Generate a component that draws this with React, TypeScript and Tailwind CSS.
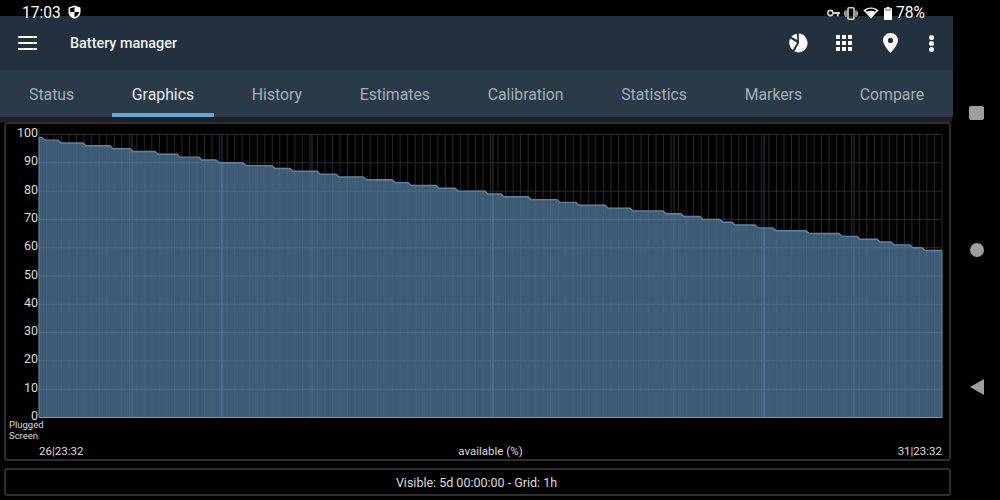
import React from "react";

const BP: [number, number][] = [
  [43, 99], [59, 98], [84, 97], [111, 96], [131, 95], [156, 94], [178, 93], [200, 92], [217, 91], [244, 90],
  [273, 89], [291, 88], [318, 87], [337, 86], [364, 85], [393, 84], [409, 83], [437, 82], [456, 81], [486, 80],
  [502, 79], [529, 78], [558, 77], [577, 76], [606, 75], [631, 74], [664, 73], [682, 72], [701, 71], [721, 70],
  [733, 69], [756, 68], [774, 67], [807, 66], [840, 65], [858, 64], [878, 63], [892, 62], [911, 61], [923, 60],
];
const X0 = 39, X1 = 942, Y0 = 417.5, K = 2.83;
const yOf = (v: number) => Y0 - v * K;

function linePoints() {
  let p = `${X0},${yOf(99)}`;
  BP.forEach(([x, v]) => {
    p += ` ${x - 1},${yOf(v)} ${x + 2},${yOf(v - 1)}`;
  });
  p += ` ${X1},${yOf(59)}`;
  return p;
}

function Chart() {
  const pts = linePoints();
  const step = (X1 - X0) / 120;
  const verticals = Array.from({ length: 121 }, (_, i) => X0 + i * step);
  const ticks = [0, 10, 20, 30, 40, 50, 60, 70, 80, 90, 100];
  const clipId = "fillclip";
  return (
    <svg viewBox="6 124 943 335" width={943} height={335} className="block">
      <defs>
        <clipPath id={clipId}>
          <polygon points={`${X0},${Y0} ${pts} ${X1},${Y0}`} />
        </clipPath>
      </defs>
      {verticals.map((x) => (
        <line key={x} x1={x} x2={x} y1={134} y2={Y0} stroke="#282828" strokeWidth={1} />
      ))}
      {[132, 312, 493, 674, 854].map((x) => (
        <line key={x} x1={x} x2={x} y1={134} y2={Y0} stroke="#38382c" strokeWidth={1} />
      ))}
      {[222, 764].map((x) => (
        <line key={x} x1={x} x2={x} y1={134} y2={Y0} stroke="#34345c" strokeWidth={1} />
      ))}
      {ticks.map((t) => (
        <line key={t} x1={X0} x2={X1} y1={yOf(t)} y2={yOf(t)} stroke="#2c2c2c" strokeWidth={1} />
      ))}
      <polygon points={`${X0},${Y0} ${pts} ${X1},${Y0}`} fill="#3e5b75" />
      <g clipPath={`url(#${clipId})`}>
        {verticals.map((x) => (
          <line key={x} x1={x} x2={x} y1={134} y2={Y0} stroke="#47647e" strokeWidth={1} />
        ))}
        {[132, 312, 674, 854].map((x) => (
          <line key={x} x1={x} x2={x} y1={134} y2={Y0} stroke="#4f6c82" strokeWidth={1} />
        ))}
        <line x1={493} x2={493} y1={134} y2={Y0} stroke="#5f7d92" strokeWidth={1} />
        {[222, 764].map((x) => (
          <line key={x} x1={x} x2={x} y1={134} y2={Y0} stroke="#5a80ab" strokeWidth={1} />
        ))}
        {ticks.map((t) => (
          <line key={t} x1={X0} x2={X1} y1={yOf(t)} y2={yOf(t)} stroke="#4f6d87" strokeWidth={1} />
        ))}
      </g>
      <polyline points={pts} fill="none" stroke="#5c86a8" strokeWidth={1.4} />
      <line x1={X0} x2={X1} y1={Y0} y2={Y0} stroke="#6b9cc4" strokeWidth={1.2} />
      <line x1={X0} x2={X0} y1={yOf(99)} y2={Y0} stroke="#5c86a8" strokeWidth={1} />
      <line x1={X1} x2={X1} y1={yOf(59)} y2={Y0} stroke="#5c86a8" strokeWidth={1} />
      <g fontFamily="Roboto, sans-serif" fill="#dcdcdc" fontSize={12.5}>
        {ticks.map((t) => (
          <text key={t} x={38} y={yOf(t) + 2.5} textAnchor="end">
            {t}
          </text>
        ))}
        <text x={39} y={455} fontSize={11.5}>26|23:32</text>
        <text x={490.5} y={455} fontSize={11.5} textAnchor="middle">available (%)</text>
        <text x={942} y={455} fontSize={11.5} textAnchor="end">31|23:32</text>
        <text x={9} y={428} fontSize={9.5}>Plugged</text>
        <text x={9} y={439} fontSize={9.5}>Screen</text>
      </g>
    </svg>
  );
}

function ShieldIcon() {
  return (
    <svg width="13" height="14" viewBox="0 0 13 14" className="block -mt-[3px]">
      <path d="M6.5 0.5 L12.5 2.6 V7 C12.5 10.4 10 12.8 6.5 13.8 C3 12.8 0.5 10.4 0.5 7 V2.6 Z" fill="#fff" />
      <path d="M6.5 2 L2 3.6 V7 H6.5 Z M6.5 7 H11 C10.8 9.4 9 11.3 6.5 12.2 Z" fill="#000" />
    </svg>
  );
}

function KeyIcon() {
  return (
    <svg width="13" height="9" viewBox="0 0 13 9" className="block">
      <circle cx="3.4" cy="4" r="2.6" fill="none" stroke="#d0d0d0" strokeWidth="1.6" />
      <path d="M6 3 H13 V5 H11.8 V7.2 H9.8 V5 H6 Z" fill="#d0d0d0" />
    </svg>
  );
}

function VibrateIcon() {
  return (
    <svg width="14" height="13" viewBox="0 0 14 13" className="block">
      <rect x="4" y="0.8" width="6" height="11.4" rx="1" fill="none" stroke="#d0d0d0" strokeWidth="1.6" />
      <path d="M2 3.2 V9.8 M12 3.2 V9.8" stroke="#d0d0d0" strokeWidth="1.3" />
      <path d="M0.4 4.6 V8.4 M13.6 4.6 V8.4" stroke="#d0d0d0" strokeWidth="1" />
    </svg>
  );
}

function WifiIcon() {
  return (
    <svg width="16" height="12" viewBox="0 0 16 12" className="block">
      <path d="M0.4 3.3 C4.6 -0.6 11.4 -0.6 15.6 3.3 L8 11.6 Z" fill="#fff" />
      <path d="M2.6 3.3 C5.6 1.2 10.4 1.2 13.4 3.3 L12.1 4.8 C9.6 3.3 6.4 3.3 3.9 4.8 Z" fill="#000" />
    </svg>
  );
}

function BatteryIcon() {
  return (
    <svg width="8" height="13" viewBox="0 0 8 13" className="block">
      <path d="M2.4 0 H5.6 V1.2 H8 V13 H0 V1.2 H2.4 Z" fill="#fff" />
      <rect x="1" y="2.2" width="6" height="1.4" fill="#8a8a8a" />
    </svg>
  );
}

function PieIcon() {
  return (
    <svg width="20" height="20" viewBox="0 0 20 20" className="block">
      <path d="M11 10 L10.8 0.6 A9.4 9.4 0 1 1 6.4 18.6 Z" fill="#fff" />
      <path d="M8.8 0.8 L9.4 7 L3.2 3.8 A9.4 9.4 0 0 1 8.8 0.8 Z" fill="#fff" />
      <path d="M2.2 5.6 L9 9.8 L4.8 17 A9.4 9.4 0 0 1 2.2 5.6 Z" fill="#fff" />
    </svg>
  );
}

function GridIcon() {
  return (
    <div className="grid grid-cols-3 gap-[2px] w-[16px]">
      {Array.from({ length: 9 }, (_, i) => (
        <div key={i} className="w-[4px] h-[4px] bg-white" />
      ))}
    </div>
  );
}

function PinIcon() {
  return (
    <svg width="15" height="20" viewBox="0 0 15 20" className="block">
      <path
        fillRule="evenodd"
        d="M7.5 0 C11.6 0 15 3.2 15 7.3 C15 12.2 7.5 20 7.5 20 C7.5 20 0 12.2 0 7.3 C0 3.2 3.4 0 7.5 0 Z M7.5 4.8 A2.6 2.6 0 1 0 7.5 10 A2.6 2.6 0 1 0 7.5 4.8 Z"
        fill="#fff"
      />
    </svg>
  );
}

function DotsIcon() {
  return (
    <div className="flex flex-col gap-[1px]">
      <div className="w-[5px] h-[5px] rounded-full bg-white" />
      <div className="w-[5px] h-[5px] rounded-full bg-white" />
      <div className="w-[5px] h-[5px] rounded-full bg-white" />
    </div>
  );
}

const TABS = ["Status", "Graphics", "History", "Estimates", "Calibration", "Statistics", "Markers", "Compare"];

export default function App() {
  return (
    <div className="w-[1000px] h-[500px] flex bg-black overflow-hidden font-['Roboto',sans-serif]">
      <div className="w-[953px] flex flex-col">
        <div className="h-[16px] bg-black flex items-start justify-between pl-[22px] pr-[28px] relative z-10 text-white text-[15.6px] leading-[16px] pt-[5px]">
          <div className="flex items-center gap-[7px]">
            <span className="leading-[16px]">17:03</span>
            <ShieldIcon />
          </div>
          <div className="flex items-center gap-[4px]">
            <KeyIcon />
            <VibrateIcon />
            <div className="mx-[1px]"><WifiIcon /></div>
            <BatteryIcon />
            <span className="leading-[16px]">78%</span>
          </div>
        </div>
        <div className="h-[54px] bg-[#22313d] flex items-center">
          <div className="w-[70px] pl-[18px] shrink-0">
            <div className="flex flex-col gap-[4px] w-[19px]">
              <div className="h-[2px] bg-white" />
              <div className="h-[2px] bg-white" />
              <div className="h-[2px] bg-white" />
            </div>
          </div>
          <span className="text-[14.4px] font-medium text-[#eef1f3] flex-1 pt-[2px]">Battery manager</span>
          <div className="flex items-center pr-[19px]">
            <PieIcon />
            <div className="ml-[28px]"><GridIcon /></div>
            <div className="ml-[31px]"><PinIcon /></div>
            <div className="ml-[31px]"><DotsIcon /></div>
          </div>
        </div>
        <div className="h-[47px] bg-[#2a3b47] flex pl-[9px] gap-[17.7px]">
          {TABS.map((t) => (
            <div
              key={t}
              className={
                t === "Graphics"
                  ? "px-5 h-full flex items-center text-[15.8px] text-[#e6eaed] border-b-4 border-[#5fa8e0] pt-[6px]"
                  : "px-5 h-full flex items-center text-[15.8px] text-[#a3afb7] border-b-4 border-transparent pt-[6px]"
              }
            >
              {t}
            </div>
          ))}
        </div>
        <div className="h-[5px] bg-[#202020] mr-[1px]" />
        <div className="flex-1 flex flex-col pl-[4px] pr-[2px] pb-[4px] gap-[7px]">
          <div className="h-[339px] border-2 border-[#2e2e2e] rounded-[3px] bg-black overflow-hidden">
            <Chart />
          </div>
          <div className="h-[28px] border-2 border-[#2e2e2e] rounded-[3px] bg-black flex items-center justify-center text-[12.5px] text-[#dcdcdc] pt-[2px] pr-[2px]">
            Visible: 5d 00:00:00 - Grid: 1h
          </div>
        </div>
      </div>
      <div className="flex-1 flex flex-col items-center pt-[106px]">
        <div className="w-[15px] h-[14px] bg-[#9e9e9e] rounded-[2px]" />
        <div className="w-[14px] h-[14px] bg-[#9e9e9e] rounded-full mt-[123px]" />
        <svg width="14" height="16" viewBox="0 0 14 16" className="mt-[122px] block">
          <path d="M0 8 L14 0 V16 Z" fill="#9e9e9e" />
        </svg>
      </div>
    </div>
  );
}
